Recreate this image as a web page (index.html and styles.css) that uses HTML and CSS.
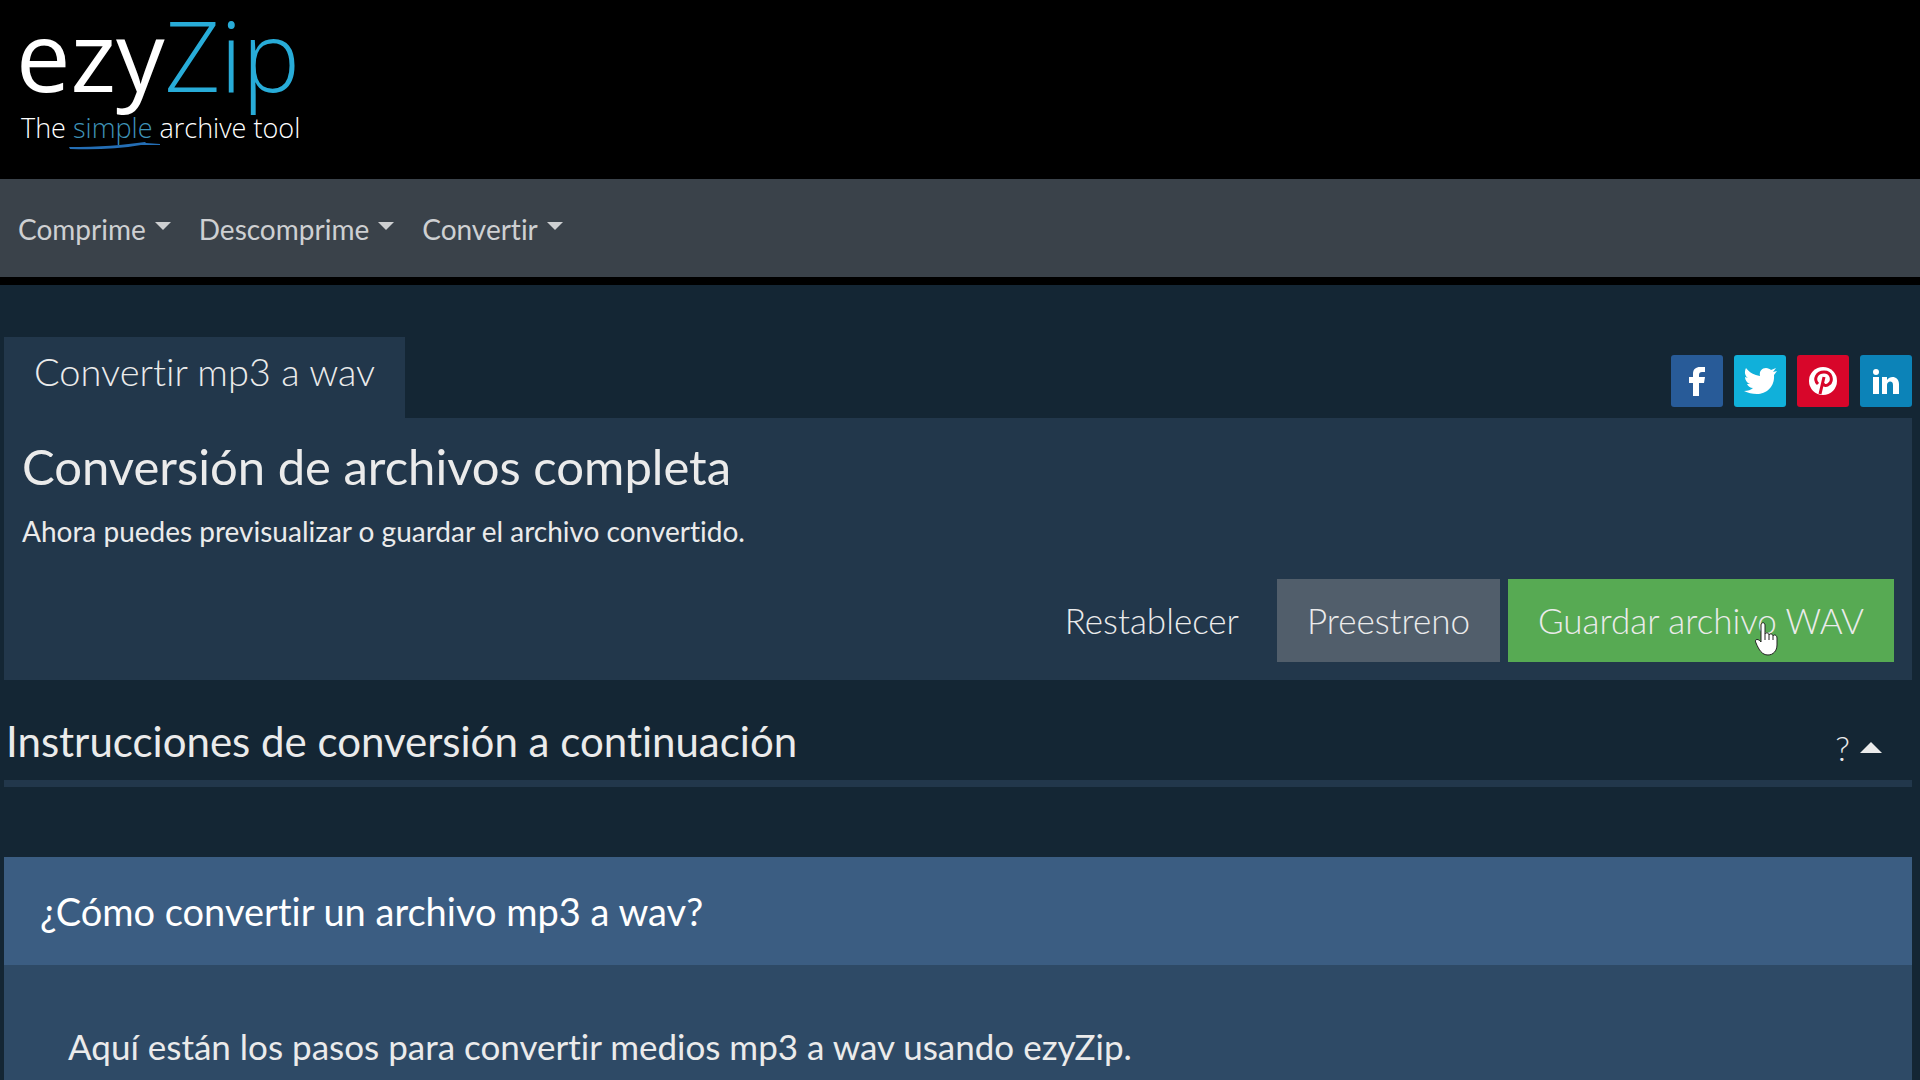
FILE: index.html
```html
<!DOCTYPE html>
<html lang="es">
<head>
    <meta charset="UTF-8">
    <meta name="viewport" content="width=device-width, initial-scale=1.0">
    <title>Convertir mp3 a wav - ezyZip</title>
    <link rel="stylesheet" href="styles.css">
</head>
<body>

    <!-- Header -->
    <header class="site-header">
        <a href="#" class="logo">
            <span class="logo-name">ezy<span class="logo-zip">Zip</span></span>
            <span class="logo-tagline">The <span class="logo-simple">simple<svg class="logo-stroke" viewBox="0 0 92 8" aria-hidden="true"><path d="M0 5 C30 5 55 3 76 0 L77 1 L91 2 L91 3 L72 3 C50 7 25 8 1 7 Z"/></svg></span> archive tool</span>
        </a>
    </header>

    <!-- Navigation -->
    <nav class="navbar">
        <button type="button" class="nav-item">Comprime</button>
        <button type="button" class="nav-item">Descomprime</button>
        <button type="button" class="nav-item">Convertir</button>
    </nav>

    <main class="content">
        <div class="tab-row">
            <h1 class="tab">Convertir mp3 a wav</h1>
            <div class="share">
                <a href="#" class="share-btn facebook" aria-label="Facebook">
                    <svg viewBox="0 0 52 52"><path d="M22 41V28h-4v-6h4v-3c0-5 3-7 7-7h5v5h-3c-2 0-3 1-3 3v2h6l-1 6h-5v13z"/></svg>
                </a>
                <a href="#" class="share-btn twitter" aria-label="Twitter">
                    <svg viewBox="0 0 52 52"><path d="M43 16l-3 4c1 12-8 19-17 19-5 0-9-1-13-3 4 0 7-1 9-3-3 0-5-2-6-4h3c-3-1-5-4-5-7l3 1c-3-2-4-6-2-10 4 5 8 7 14 8-1-5 2-8 6-8 2 0 4 1 5 2l5-2-3 4z"/></svg>
                </a>
                <a href="#" class="share-btn pinterest" aria-label="Pinterest">
                    <svg viewBox="0 0 52 52"><circle cx="26" cy="26" r="14"/><path class="pin" d="M21 29c-5-5-1-12 6-12 8 0 9 9 5 12-3 3-6 1-6-1M27 22l-4 17"/></svg>
                </a>
                <a href="#" class="share-btn linkedin" aria-label="LinkedIn">
                    <svg viewBox="0 0 52 52"><circle cx="16" cy="17" r="3"/><path d="M13 22h6v17h-6zM22 22h5v3c3-5 12-4 12 4v10h-6v-9c0-5-6-4-6 0v9h-5z"/></svg>
                </a>
            </div>
        </div>

        <!-- Result -->
        <section class="panel">
            <h2 class="panel-title">Conversión de archivos completa</h2>
            <p class="panel-text">Ahora puedes previsualizar o guardar el archivo convertido.</p>
            <div class="actions">
                <button type="button" class="btn btn-reset">Restablecer</button>
                <button type="button" class="btn btn-preview">Preestreno</button>
                <button type="button" class="btn btn-save">Guardar archivo WAV
                    <svg class="pointer" viewBox="0 0 24 34" aria-hidden="true"><path d="M7 20V3c0-3 4-3 4 0v9c1-2 4-1 4 1 1-2 4-1 4 1 1-2 4-1 4 2v7c0 6-4 10-9 10-6 0-9-5-12-12-2-4 2-5 5-1z"/><path d="M11 12v6M15 13v5M19 14v4"/></svg>
                </button>
            </div>
        </section>

        <!-- Instructions -->
        <div class="help-row">
            <h2 class="help-title">Instrucciones de conversión a continuación</h2>
            <button type="button" class="help-toggle">?</button>
        </div>

        <section class="card">
            <h2 class="card-title">¿Cómo convertir un archivo mp3 a wav?</h2>
            <p class="card-text">Aquí están los pasos para convertir medios mp3 a wav usando ezyZip.</p>
        </section>
    </main>

</body>
</html>
```
FILE: styles.css
```css
/* Base */
* {
    box-sizing: border-box;
}

body {
    margin: 0;
    background: #142634;
    color: #ebebeb;
    font-family: Lato, sans-serif;
    font-variant-ligatures: none;
    overflow-x: hidden;
}

h1, h2, p {
    margin: 0;
    font-weight: 400;
}

button {
    border: none;
    background: none;
    color: inherit;
    font-family: inherit;
    font-variant-ligatures: inherit;
    cursor: pointer;
}

/* Header */
.site-header {
    background: #000;
    padding: 4px 16px 36px;
}

.logo {
    display: inline-flex;
    flex-direction: column;
    gap: 8px;
    color: #fff;
    font-family: "Open Sans", sans-serif;
    text-decoration: none;
}

.logo-name {
    font-size: 97px;
    line-height: 100px;
}

.logo-zip {
    color: #28acd8;
    font-weight: 300;
}

.logo-tagline {
    padding-left: 5px;
    font-size: 27px;
    font-weight: 300;
    line-height: 31px;
}

.logo-simple {
    position: relative;
    color: #3f93b8;
}

.logo-stroke {
    position: absolute;
    left: -4px;
    bottom: -4px;
    width: 92px;
    height: 8px;
    fill: #246eb5;
}

/* Navigation */
.navbar {
    display: flex;
    gap: 28px;
    height: 106px;
    padding: 0 18px;
    background: #3a424a;
    border-bottom: 8px solid #000;
}

.nav-item {
    display: flex;
    align-items: center;
    padding: 2px 0 0;
    color: #ced0d2;
    font-size: 28px;
}

.nav-item::after {
    content: "";
    margin: 0 0 6px 9px;
    border: 8px solid transparent;
    border-top-color: #ced0d2;
    border-bottom: 0;
}

/* Tab and share buttons */
.content {
    padding: 52px 8px 0 4px;
}

.tab-row {
    display: flex;
    justify-content: space-between;
    align-items: flex-end;
}

.tab {
    padding: 10px 30px 23px;
    background: #22374b;
    font-size: 38px;
    font-weight: 300;
    line-height: 48px;
}

.share {
    display: flex;
    gap: 11px;
    padding-bottom: 11px;
}

.share-btn {
    width: 52px;
    height: 52px;
    border-radius: 3px;
}

.share-btn svg {
    display: block;
    fill: #fff;
}

.share-btn .pin {
    fill: none;
    stroke: #d8062a;
    stroke-width: 3;
}

.facebook {
    background: #285b98;
}

.twitter {
    background: #10b0da;
}

.pinterest {
    background: #d8062a;
}

.linkedin {
    background: #0c83b8;
}

/* Result panel */
.panel {
    padding: 18px;
    background: #22374b;
}

.panel-title {
    font-size: 49px;
    line-height: 60px;
}

.panel-text {
    padding: 18px 0 31px;
    font-size: 28px;
    line-height: 34px;
}

.actions {
    display: flex;
    justify-content: flex-end;
    gap: 8px;
}

.btn {
    padding: 0 30px;
    font-size: 35px;
    font-weight: 300;
    line-height: 83px;
}

.btn-preview {
    background: #515e6b;
}

.btn-save {
    position: relative;
    background: #57aa53;
}

.pointer {
    position: absolute;
    right: 116px;
    bottom: 6px;
    width: 24px;
    height: 34px;
    fill: #fff;
    stroke: #222;
    stroke-width: 1;
}

/* Instructions */
.help-row {
    display: flex;
    justify-content: space-between;
    padding: 35px 30px 12px 2px;
    border-bottom: 7px solid #22374b;
}

.help-title {
    font-size: 42px;
    line-height: 52px;
}

.help-toggle {
    display: flex;
    align-items: center;
    gap: 10px;
    padding: 12px 0 0;
    font-size: 34px;
    font-weight: 300;
}

.help-toggle::after {
    content: "";
    border: 11px solid transparent;
    border-bottom-color: #ebebeb;
    border-top: 0;
}

.card {
    margin-top: 70px;
    background: #2e4a66;
}

.card-title {
    padding: 29px 36px;
    background: #3b5d82;
    color: #fff;
    font-size: 38px;
    line-height: 50px;
}

.card-text {
    padding: 58px 64px 40px;
    font-size: 35px;
    line-height: 46px;
}
```
